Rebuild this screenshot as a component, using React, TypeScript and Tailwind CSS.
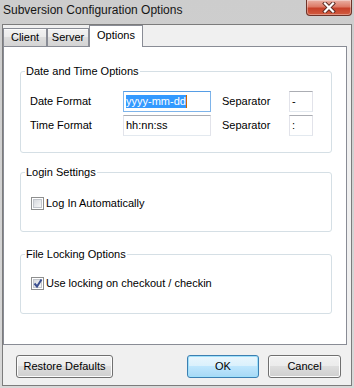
import type { ReactNode } from 'react'
import clsx from 'clsx'

function CloseButton() {
  return (
    <div className="ml-auto mr-[2px] w-[46px] h-[16px] flex items-center justify-center rounded-b-[4px] border border-t-0 border-[#6e3328] bg-[linear-gradient(to_bottom,#eab1a5_0%,#dd7a66_45%,#c7412a_55%,#d25c40_100%)] shadow-[inset_0_0_0_1px_rgba(255,255,255,0.35)]">
      <svg width="14" height="11" viewBox="0 0 14 11">
        <path d="M3 1.5 L11 9.5 M11 1.5 L3 9.5" stroke="#5a2a22" strokeWidth="4" strokeLinecap="square" />
        <path d="M3 1.5 L11 9.5 M11 1.5 L3 9.5" stroke="#ffffff" strokeWidth="2.2" strokeLinecap="square" />
      </svg>
    </div>
  )
}

function Tab({ label, active, className }: { label: string; active?: boolean; className: string }) {
  if (active) {
    return (
      <div className={clsx('h-[22px] -mb-px z-10 flex items-center justify-center pb-[3px] bg-white border border-b-0 border-[#898c95] text-[11px] leading-[13px]', className)}>
        {label}
      </div>
    )
  }
  return (
    <div className={clsx('h-[18px] flex items-center justify-center border border-b-0 border-[#898c95] bg-[linear-gradient(to_bottom,#f2f2f2_0%,#ebebeb_50%,#dddddd_50%,#d4d4d4_100%)] shadow-[inset_0_1px_0_#fcfcfc] text-[11px] leading-[13px]', className)}>
      {label}
    </div>
  )
}

function Group({ title, className, children }: { title: string; className: string; children: ReactNode }) {
  return (
    <fieldset className={clsx('ml-[16px] mr-[14px] border border-[#d5dfe5] rounded-[3px]', className)}>
      <legend className="ml-[4px] px-[1px] text-[11px] leading-[14px]">{title}</legend>
      {children}
    </fieldset>
  )
}

function TextBox({ className, focused, children }: { className: string; focused?: boolean; children: ReactNode }) {
  return (
    <div
      className={clsx(
        'h-[21px] flex items-center pl-[2px] border bg-white text-[11px] leading-[13px]',
        focused
          ? 'border-[#7eb4ea] border-t-[#569de5]'
          : 'border-[#e2e3ea] border-t-[#abadb3] border-b-[#e3e9ef]',
        className,
      )}
    >
      {children}
    </div>
  )
}

function CheckBox({ checked, label }: { checked?: boolean; label: string }) {
  return (
    <div className="flex items-center gap-[2px] h-[13px] pl-[10px]">
      <div className="w-[13px] h-[13px] shrink-0 flex items-center justify-center border border-[#8e8f8f] bg-white">
        <div className="relative w-[9px] h-[9px] border border-[#c2c6cc] bg-[linear-gradient(135deg,#d6d9de,#f7f7f7)]">
          {checked && (
            <svg className="absolute -left-[1px] -top-[2px]" width="10" height="11" viewBox="0 0 10 11">
              <path d="M1.5 5.5 L4 8.5 L8.5 1.5" fill="none" stroke="#3b4f8f" strokeWidth="2" />
            </svg>
          )}
        </div>
      </div>
      <span className="text-[11px] leading-[13px]">{label}</span>
    </div>
  )
}

function Button({ label, primary, className }: { label: string; primary?: boolean; className: string }) {
  return (
    <div
      className={clsx(
        'h-[23px] flex items-center justify-center rounded-[3px] border text-[11px] leading-[13px]',
        primary
          ? 'border-[#3c7fb1] bg-[linear-gradient(to_bottom,#eaf6fd_0%,#d9f0fc_50%,#bee6fd_50%,#a7d9f5_100%)] shadow-[inset_0_0_0_1px_#9fe0fb]'
          : 'border-[#707070] bg-[linear-gradient(to_bottom,#f2f2f2_0%,#ebebeb_50%,#dddddd_50%,#cfcfcf_100%)] shadow-[inset_0_0_0_1px_#fcfcfc]',
        className,
      )}
    >
      {label}
    </div>
  )
}

export default function App() {
  return (
    <div className="w-[354px] h-[388px] flex flex-col overflow-hidden bg-[linear-gradient(to_bottom,#cdcdcd,#d8d8d8)] font-['Liberation_Sans',Arial,sans-serif] text-black">
      <div className="h-[24px] shrink-0 flex items-start">
        <span className="pl-[3px] pt-[3px] text-[12px] leading-[15px] text-[#151515]">Subversion Configuration Options</span>
        <CloseButton />
      </div>

      <div className="mx-[2px] mb-[2px] flex-1 flex flex-col bg-[#f0f0f0] border border-[#7c7c7c]">
        <div className="h-[21px] flex items-end">
          <Tab label="Client" className="w-[44px]" />
          <Tab label="Server" className="w-[42px]" />
          <Tab label="Options" active className="w-[54px]" />
        </div>

        <div className="mr-[4px] h-[299px] flex flex-col bg-white border border-[#898c95]">
          <Group title="Date and Time Options" className="mt-[17px] pt-[13px] pb-[16px]">
            <div className="flex items-center pl-[9px]">
              <span className="w-[93px] text-[11px] leading-[13px]">Date Format</span>
              <TextBox focused className="w-[88px]">
                <span className="bg-[#3399ff] text-white">yyyy-mm-dd</span>
                <span className="w-px h-[13px] bg-[#cc6600]" />
              </TextBox>
              <span className="ml-[11px] w-[67px] text-[11px] leading-[13px]">Separator</span>
              <TextBox className="w-[24px]">-</TextBox>
            </div>
            <div className="mt-[3px] flex items-center pl-[9px]">
              <span className="w-[93px] text-[11px] leading-[13px]">Time Format</span>
              <TextBox className="w-[88px]">hh:nn:ss</TextBox>
              <span className="ml-[11px] w-[67px] text-[11px] leading-[13px]">Separator</span>
              <TextBox className="w-[24px]">:</TextBox>
            </div>
          </Group>

          <Group title="Login Settings" className="mt-[12px] pt-[18px] pb-[21px]">
            <CheckBox label="Log In Automatically" />
          </Group>

          <Group title="File Locking Options" className="mt-[15px] pt-[16px] pb-[23px]">
            <CheckBox checked label="Use locking on checkout / checkin" />
          </Group>
        </div>

        <div className="mt-[10px] flex items-start pl-[13px] pr-[10px]">
          <Button label="Restore Defaults" className="w-[97px]" />
          <div className="flex-1" />
          <Button label="OK" primary className="w-[72px]" />
          <Button label="Cancel" className="ml-[9px] w-[73px]" />
        </div>
      </div>
    </div>
  )
}
